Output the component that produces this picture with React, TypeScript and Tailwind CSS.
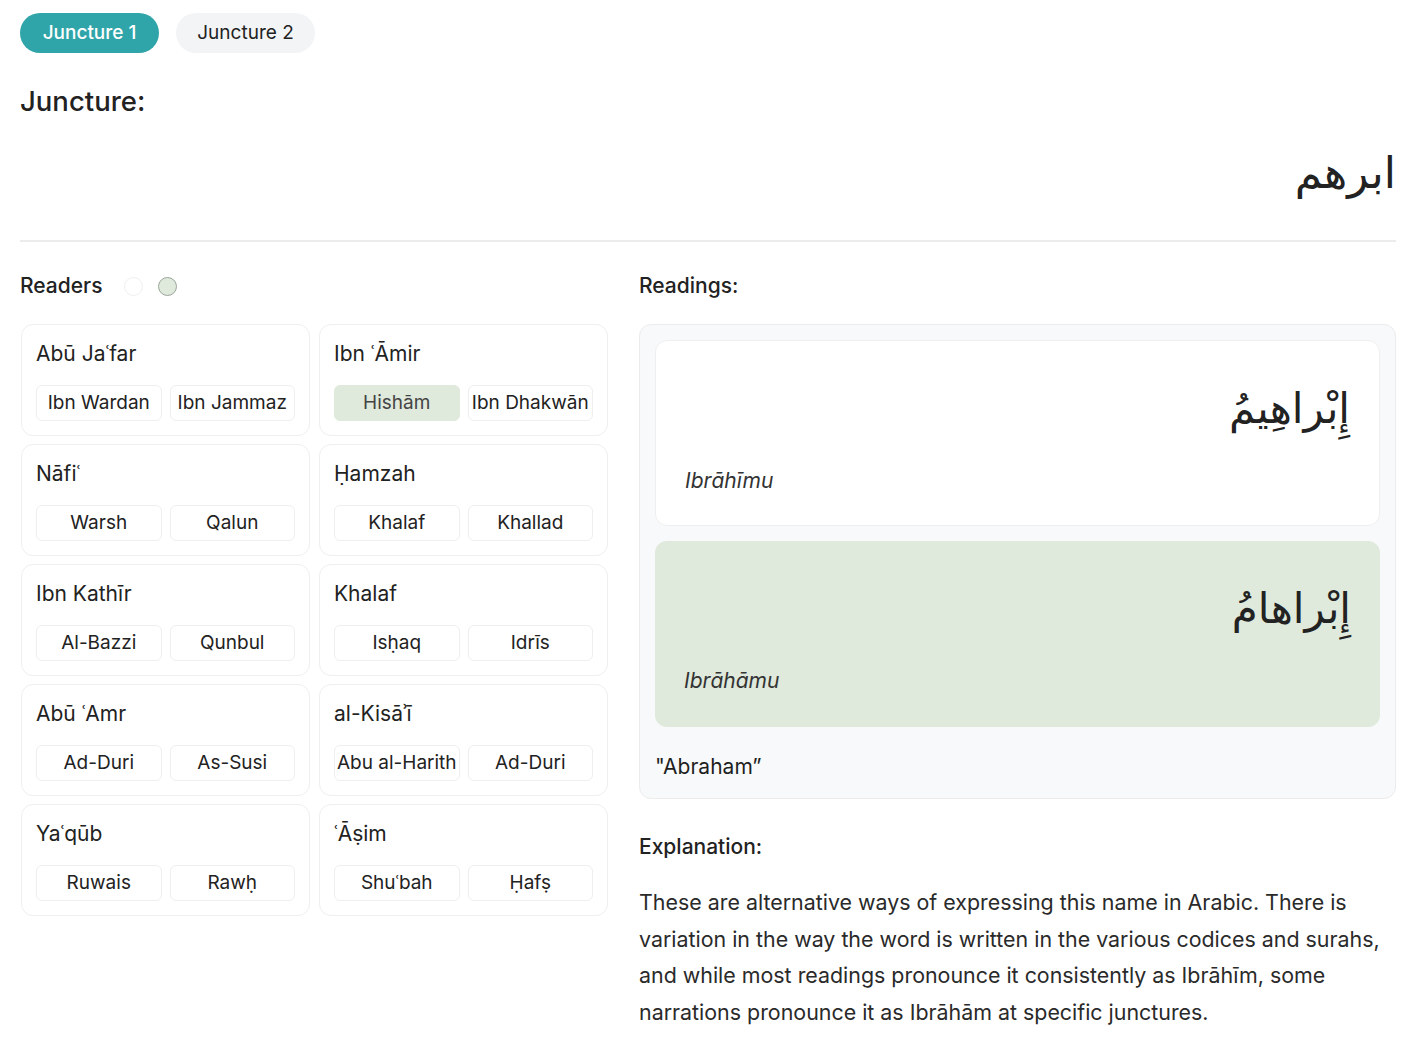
import { useState } from "react";

type Reader = { name: string; narrators: string[] };

const readers: Reader[] = [
  { name: "Abū Jaʿfar", narrators: ["Ibn Wardan", "Ibn Jammaz"] },
  { name: "Ibn ʿĀmir", narrators: ["Hishām", "Ibn Dhakwān"] },
  { name: "Nāfiʿ", narrators: ["Warsh", "Qalun"] },
  { name: "Ḥamzah", narrators: ["Khalaf", "Khallad"] },
  { name: "Ibn Kathīr", narrators: ["Al-Bazzi", "Qunbul"] },
  { name: "Khalaf", narrators: ["Isḥaq", "Idrīs"] },
  { name: "Abū ʿAmr", narrators: ["Ad-Duri", "As-Susi"] },
  { name: "al-Kisāʾī", narrators: ["Abu al-Harith", "Ad-Duri"] },
  { name: "Yaʿqūb", narrators: ["Ruwais", "Rawḥ"] },
  { name: "ʿĀṣim", narrators: ["Shuʿbah", "Ḥafṣ"] },
];

const readings = [
  { arabic: "إِبْراهِيمُ", latin: "Ibrāhīmu", active: false },
  { arabic: "إِبْراهامُ", latin: "Ibrāhāmu", active: true },
];

const arabicFont = "[font-family:'DejaVu_Sans','Noto_Sans',sans-serif]";

export default function App() {
  const [tab, setTab] = useState(0);
  const [picked, setPicked] = useState("Hishām");

  return (
    <div className="min-h-screen bg-white pl-5 pr-6 pt-[13px] text-[#1f1f1f] [font-family:Inter,'Noto_Sans',sans-serif]">
      {/* juncture tabs */}
      <div className="flex items-center gap-[17px]">
        {["Juncture 1", "Juncture 2"].map((label, i) => (
          <button
            key={label}
            onClick={() => setTab(i)}
            className={`h-10 w-[139px] rounded-full pt-px text-[19px] ${
              tab === i ? "bg-[#30a5a9] font-medium text-white" : "bg-[#f3f4f6] text-[#222]"
            }`}
          >
            {label}
          </button>
        ))}
      </div>

      <h2 className="mt-[32px] text-[27.5px] font-medium leading-8 text-[#222]">Juncture:</h2>

      <div className="mt-[20px] flex justify-end">
        <span dir="rtl" className={`text-[44px] leading-[72px] text-[#222] ${arabicFont}`}>
          ابرهم
        </span>
      </div>

      <div className="mt-[31px] h-[2px] bg-[#ececec]" />

      <div className="mt-[28px] flex gap-[31px]">
        {/* readers */}
        <div className="w-[588px] shrink-0">
          <div className="flex h-[32px] items-center">
            <span className="text-[21px] font-medium text-[#222]">Readers</span>
            <span className="ml-[21px] h-[19px] w-[19px] rounded-full border border-[#f0f0f0] bg-white" />
            <span className="ml-[15px] h-[19px] w-[19px] rounded-full border border-[#9aa59a] bg-[#dfe9dc]" />
          </div>

          <div className="mt-[22px] ml-px grid grid-cols-2 gap-x-[9px] gap-y-2">
            {readers.map((r) => (
              <div
                key={r.name}
                className="h-[112px] rounded-xl border border-[#efefef] bg-white px-[14px] pt-[14px]"
              >
                <div className="text-[21px] leading-[30px] text-[#222]">{r.name}</div>
                <div className="mt-[16px] grid grid-cols-2 gap-2">
                  {r.narrators.map((n) => (
                    <button
                      key={n}
                      onClick={() => setPicked(n)}
                      className={`h-9 rounded-md border text-[19px] text-[#222] ${
                        picked === n && r.name === "Ibn ʿĀmir"
                          ? "border-[#dfe9dc] bg-[#dfe9dc] text-[#444]"
                          : "border-[#efefef] bg-white"
                      }`}
                    >
                      {n}
                    </button>
                  ))}
                </div>
              </div>
            ))}
          </div>
        </div>

        {/* readings */}
        <div className="min-w-0 flex-1">
          <div className="flex h-[32px] items-center text-[21px] font-medium text-[#222]">Readings:</div>

          <div className="mt-[22px] rounded-xl border border-[#ececec] bg-[#f8f9fa] p-[15px] pb-[17px]">
            <div className="flex flex-col gap-[15px]">
              {readings.map((rd) => (
                <div
                  key={rd.latin}
                  className={`h-[186px] rounded-xl px-[29px] pt-[36px] ${
                    rd.active ? "bg-[#dfe9dc]" : "border border-[#efefef] bg-white"
                  }`}
                >
                  <div className="flex justify-end">
                    <span dir="rtl" className={`text-[42px] leading-[64px] text-[#222] ${arabicFont}`}>
                      {rd.arabic}
                    </span>
                  </div>
                  <div className="mt-[26px] text-[21px] italic leading-7 text-[#333]">{rd.latin}</div>
                </div>
              ))}
            </div>
            <div className="mt-[26px] text-[21px] leading-7 text-[#1f1f1f]">"Abraham”</div>
          </div>

          <h3 className="mt-[32px] text-[21px] font-medium leading-8 text-[#222]">Explanation:</h3>
          <p className="mt-[21px] text-[21.4px] leading-[36.7px] text-[#2a2a2a]">
            These are alternative ways of expressing this name in Arabic. There is variation in the way the
            word is written in the various codices and surahs, and while most readings pronounce it
            consistently as Ibrāhīm, some narrations pronounce it as Ibrāhām at specific junctures.
          </p>
        </div>
      </div>
    </div>
  );
}
